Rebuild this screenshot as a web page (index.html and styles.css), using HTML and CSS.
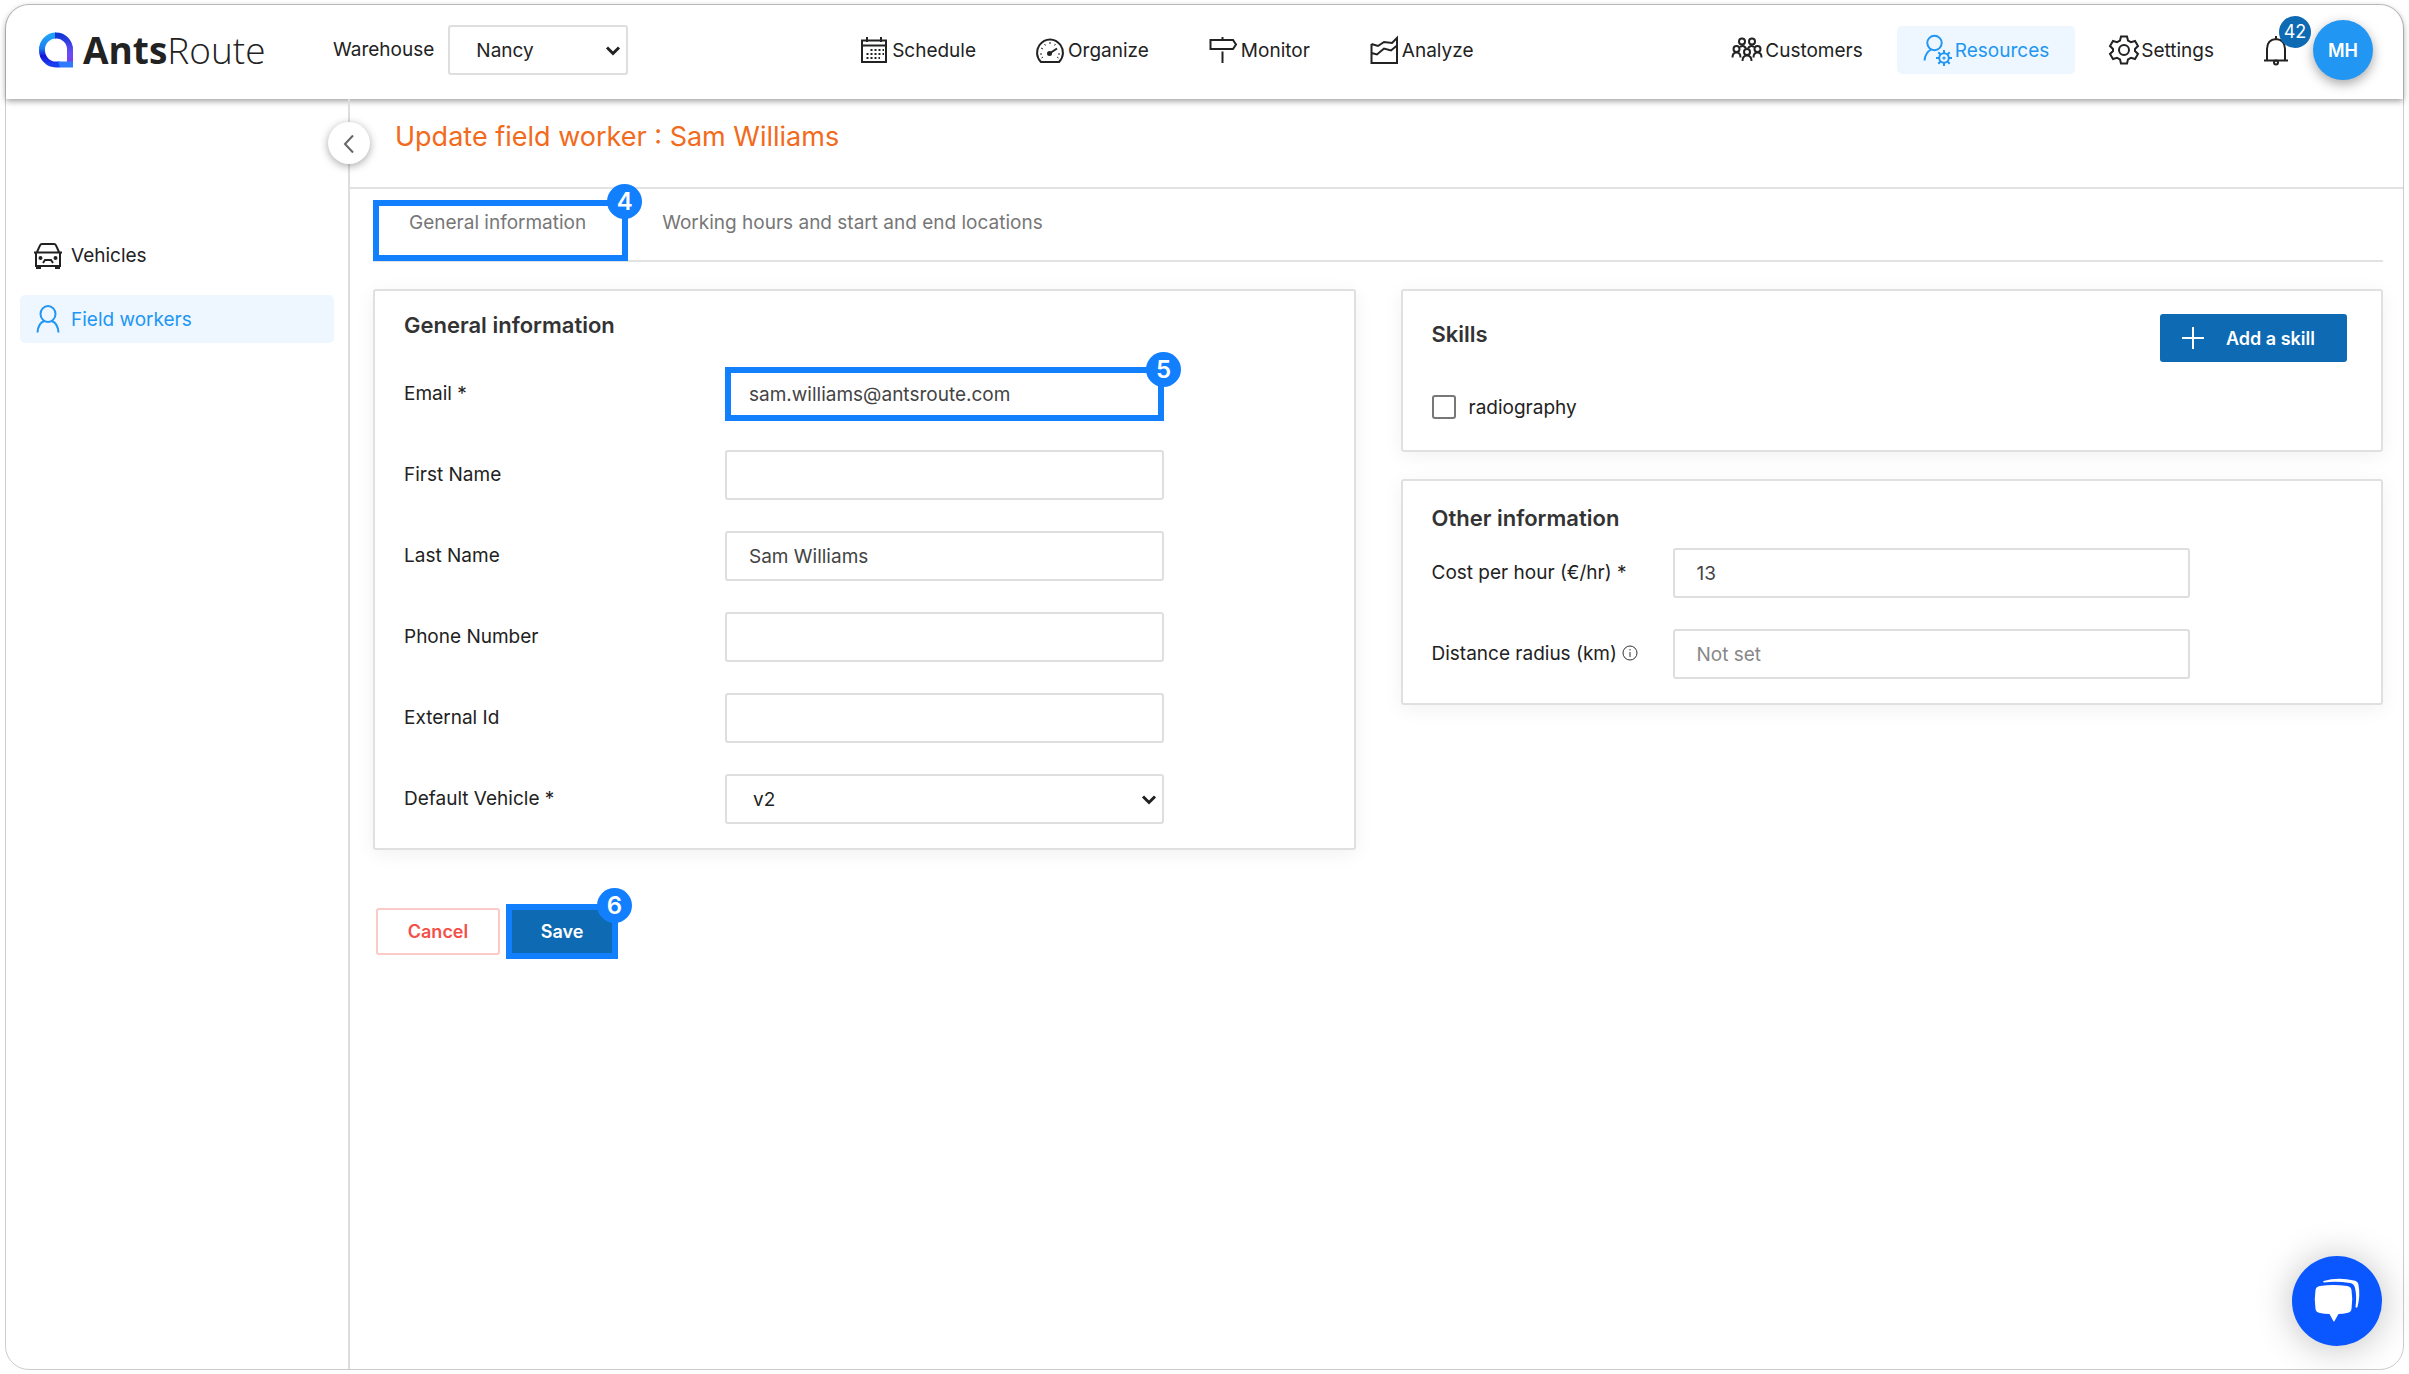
FILE: index.html
```
<!DOCTYPE html>
<html lang="en">
<head>
  <meta charset="UTF-8" />
  <title>AntsRoute - Update field worker</title>
  <link rel="stylesheet" href="styles.css">
</head>
<body>

  <div class="app">
    <header class="topbar">
      <a class="brand" href="#">
        <svg class="brand-mark" viewBox="0 0 36 36">
          <defs>
            <linearGradient id="ringLeft" x1="0" y1="0" x2="0" y2="1">
              <stop offset="0" stop-color="#1fa2f5"/>
              <stop offset="0.45" stop-color="#1c7df0"/>
              <stop offset="0.7" stop-color="#1414d8"/>
              <stop offset="1" stop-color="#1a3ff0"/>
            </linearGradient>
            <linearGradient id="ringRight" x1="0" y1="0" x2="0" y2="1">
              <stop offset="0" stop-color="#1237d6"/>
              <stop offset="0.6" stop-color="#6a4df5"/>
              <stop offset="1" stop-color="#7a3cf0"/>
            </linearGradient>
          </defs>
          <path d="M18 3.5A14 14 0 0 0 4 18A14 14 0 0 0 18 32.500L22 32.500" fill="none" stroke="url(#ringLeft)" stroke-width="6"/>
          <path d="M17 3.500H18A14 14 0 0 1 32 18V32.500" fill="none" stroke="url(#ringRight)" stroke-width="6"/>
          <path d="M20 29.500H35V35.500H22Z" fill="#2f7bff"/>
        </svg>
        <span class="brand-name"><b>Ants</b>Route</span>
      </a>

      <div class="warehouse">
        <label for="warehouse">Warehouse</label>
        <div class="select">
          <select id="warehouse"><option>Nancy</option></select>
          <svg class="caret" viewBox="0 0 16 12"><path d="M2 2.500L8 8.500L14 2.500"/></svg>
        </div>
      </div>

      <nav class="nav nav-main">
        <a href="#">
          <svg class="icon" viewBox="0 0 28 28"><path d="M2 4.500H26V26H2ZM2 9.500H26M7 1V6M21 1V6"/><path class="dots" d="M10.500 14H24M6.500 18H24M6.500 22H20"/></svg>
          Schedule
        </a>
        <a href="#">
          <svg class="icon" viewBox="0 0 28 28"><path d="M5 26H23C28 21 28 14 24.500 9C19 1.500 9 1.500 3.500 9C0 14 0 21 5 26Z"/><path class="ticks" d="M14 6V8M8.500 8L9.500 9.500M5 12L7 13M4 18H6M22 18H24M19.500 8L18.500 9.500M5.500 22L7 21M21 21L22.500 22"/><path d="M13.500 17.500L21 12.500"/><circle class="solid" cx="13.500" cy="17.500" r="1.500"/></svg>
          Organize
        </a>
        <a href="#">
          <svg class="icon" viewBox="0 0 28 28"><path d="M1.500 4H24L27 8.500L24 13H1.500ZM13.500 1V4M13.500 15.500V27"/></svg>
          Monitor
        </a>
        <a href="#">
          <svg class="icon" viewBox="0 0 28 28"><path d="M1.500 8V27H27V2L22 7L14 6L8 10L1.500 8M1.500 17L7 18.500L14 12.500L21 14.500L27 9.500"/></svg>
          Analyze
        </a>
      </nav>

      <nav class="nav nav-side">
        <a href="#">
          <svg class="icon icon-wide" viewBox="0 0 32 28"><circle cx="11" cy="5.500" r="3"/><circle cx="21" cy="5.500" r="3"/><circle cx="5.500" cy="13" r="3"/><circle cx="26.500" cy="13" r="3"/><circle cx="16" cy="16" r="3"/><path d="M1.500 21.500C1.500 18 3 16.500 5.500 16.500S9.500 18 9.500 21.500M22.500 21.500C22.500 18 24 16.500 26.500 16.500S30.500 18 30.500 21.500M11.500 25C11.500 21 13 19.500 16 19.500S20.500 21 20.500 25M9 11C12 9 14 10.500 15 12.500M17 12.500C18 10.500 20 9 23 11"/></svg>
          Customers
        </a>
        <a class="active" href="#">
          <svg class="icon icon-tall" viewBox="0 0 30 34"><circle cx="11.500" cy="10" r="7.200"/><path d="M1.500 27.500C2 22 4.500 18.500 8 16.500"/><circle cx="21" cy="25" r="4.800"/><circle class="solid" cx="21" cy="25" r=".6"/><path d="M21 17V20M21 30V33M13 25H16M26 25H29M15.300 19.300L17.500 21.500M24.500 28.500L26.700 30.700M15.300 30.700L17.500 28.500M24.500 21.500L26.700 19.300"/></svg>
          Resources
        </a>
        <a href="#">
          <svg class="icon icon-gear" viewBox="0 0 30 30"><path d="M12 1.500H18L19 5.500L22 7.200L26 6L29 11L26 14V16L29 19L26 24L22 22.800L19 24.500L18 28.500H12L11 24.500L8 22.800L4 24L1 19L4 16V14L1 11L4 6L8 7.200L11 5.500Z"/><circle cx="15" cy="15" r="5"/></svg>
          Settings
        </a>
      </nav>

      <button class="bell" type="button" aria-label="Notifications">
        <svg class="icon icon-gear" viewBox="0 0 30 30"><path d="M3 25.500H27M6 25V14C6 8 9 4.500 15 4C21 4.500 24 8 24 14V25M15 1V4"/><circle cx="15" cy="27.500" r="2"/></svg>
        <span class="bell-count">42</span>
      </button>
      <button class="avatar" type="button">MH</button>
    </header>

    <div class="body">
      <aside class="sidebar">
        <button class="collapse" type="button" aria-label="Collapse menu">
          <svg viewBox="0 0 12 20"><path d="M10 1.500L2 10L10 18.500"/></svg>
        </button>
        <a href="#">
          <svg class="icon icon-gear" viewBox="0 0 30 28"><path d="M1 11.500H29M4 11L7 4.500Q7.500 3 9 3H21Q22.500 3 23 4.500L26 11M3 12V25H27V12M4 25V27H7V25M23 25V27H26V25M10 22L12 19H18L20 22"/><circle class="solid" cx="7.500" cy="17" r="1"/><circle class="solid" cx="22.500" cy="17" r="1"/></svg>
          Vehicles
        </a>
        <a class="active" href="#">
          <svg class="icon icon-gear" viewBox="0 0 30 30"><ellipse cx="15" cy="10" rx="7.500" ry="8"/><path d="M4.500 28.500C5 22 8 18 11.500 17M25.500 28.500C25 22 22 18 18.500 17"/></svg>
          Field workers
        </a>
      </aside>

      <main class="main">
        <h1 class="page-title">Update field worker : Sam Williams</h1>

        <div class="content">
          <div class="tabs">
            <button class="tab marked" type="button">General information<span class="step">4</span></button>
            <button class="tab" type="button">Working hours and start and end locations</button>
          </div>

          <form class="form">
            <div class="columns">
              <section class="card card-general">
                <h2>General information</h2>
                <div class="row">
                  <label for="email">Email *</label>
                  <div class="field marked">
                    <input id="email" type="text" value="sam.williams@antsroute.com">
                    <span class="step">5</span>
                  </div>
                </div>
                <div class="row">
                  <label for="first">First Name</label>
                  <div class="field"><input id="first" type="text"></div>
                </div>
                <div class="row">
                  <label for="last">Last Name</label>
                  <div class="field"><input id="last" type="text" value="Sam Williams"></div>
                </div>
                <div class="row">
                  <label for="phone">Phone Number</label>
                  <div class="field"><input id="phone" type="text"></div>
                </div>
                <div class="row">
                  <label for="external">External Id</label>
                  <div class="field"><input id="external" type="text"></div>
                </div>
                <div class="row">
                  <label for="vehicle">Default Vehicle *</label>
                  <div class="field select">
                    <select id="vehicle"><option>v2</option></select>
                    <svg class="caret" viewBox="0 0 16 12"><path d="M2 2.500L8 8.500L14 2.500"/></svg>
                  </div>
                </div>
              </section>

              <div class="column">
                <section class="card card-skills">
                  <div class="card-head">
                    <h2>Skills</h2>
                    <button class="btn btn-add" type="button">
                      <svg viewBox="0 0 22 22"><path d="M11 0V22M0 11H22"/></svg>
                      Add a skill
                    </button>
                  </div>
                  <label class="check"><input type="checkbox"> radiography</label>
                </section>

                <section class="card card-other">
                  <h2>Other information</h2>
                  <div class="row">
                    <label for="cost">Cost per hour (€/hr) *</label>
                    <div class="field"><input id="cost" type="text" value="13"></div>
                  </div>
                  <div class="row">
                    <label for="radius">Distance radius (km)
                      <svg class="info" viewBox="0 0 16 16"><circle cx="8" cy="8" r="7"/><path d="M8 7V12M8 4V5.500"/></svg>
                    </label>
                    <div class="field"><input id="radius" type="text" placeholder="Not set"></div>
                  </div>
                </section>
              </div>
            </div>

            <div class="actions">
              <button class="btn btn-cancel" type="button">Cancel</button>
              <button class="btn btn-save marked" type="submit">Save<span class="step">6</span></button>
            </div>
          </form>
        </div>
      </main>
    </div>

    <button class="chat" type="button" aria-label="Open chat">
      <svg viewBox="0 0 46 46"><path d="M6 8Q19 6 33 8Q37 8.500 37.500 12Q39 21 37.500 31Q37 34.500 33 35Q29 35.800 24.500 36L20.500 43Q20 44 19.300 43L15.500 36Q10 35.800 6 35Q2 34.500 1.500 31Q0 21 1.500 12Q2 8.500 6 8Z"/><path d="M9.500 3Q24 -1 40 2.500Q44 3 44.500 7Q46.500 17 43.500 29Q42.500 30.500 41.500 29Q43 18 41 10Q40 5.500 36 5Q22 3 10 4.500Q8.500 4 9.500 3Z"/></svg>
    </button>
  </div>

</body>
</html>
```
FILE: styles.css
```
* {
  box-sizing: border-box;
}
body {
  margin: 0;
  padding: 4px 5px;
  background: #fff;
  color: #222;
  font-family: Inter, "Liberation Sans", sans-serif;
  font-size: 19px;
}
a {
  color: inherit;
  text-decoration: none;
}
button, input, select {
  font: inherit;
  color: inherit;
}
button {
  padding: 0;
  border: 0;
  background: none;
  cursor: pointer;
}
svg {
  flex: none;
  overflow: visible;
}
h1, h2 {
  margin: 0;
}
.app {
  display: flex;
  flex-direction: column;
  min-height: calc(100vh - 8px);
  border: 1px solid #ccc;
  border-radius: 24px;
}

/* top bar */
.topbar {
  position: relative;
  display: flex;
  align-items: center;
  height: 94px;
  padding: 0 30px 4px 32px;
  border-radius: 24px 24px 0 0;
  background: #fff;
  box-shadow: 0 2px 6px rgba(0,0,0,0.4);
}
.brand {
  display: flex;
  align-items: center;
  gap: 9px;
  width: 295px;
}
.brand-mark {
  width: 36px;
  height: 36px;
}
.brand-name {
  font-family: "Open Sans", sans-serif;
  font-size: 37px;
  font-weight: 300;
  line-height: 40px;
}
.brand-name b {
  font-weight: 700;
}
.warehouse {
  display: flex;
  align-items: center;
  gap: 14px;
}
.warehouse label {
  padding-bottom: 2px;
}
.select {
  position: relative;
}
.select select {
  appearance: none;
  width: 100%;
  height: 50px;
  padding: 0 26px;
  border: 2px solid #dedede;
  border-radius: 3px;
  background: #fff;
}
.warehouse .select {
  width: 180px;
}
.caret {
  position: absolute;
  top: 20px;
  right: 7px;
  width: 16px;
  height: 12px;
  fill: none;
  stroke: #222;
  stroke-width: 3;
  pointer-events: none;
}
.nav {
  display: flex;
  align-items: center;
}
.nav a {
  display: flex;
  align-items: center;
  gap: 4px;
}
.nav-main {
  gap: 60px;
  margin: 0 auto;
}
.nav-side {
  gap: 8px;
}
.nav-side a {
  gap: 2px;
  height: 48px;
  padding: 0 26px;
  border-radius: 5px;
}
.icon {
  width: 28px;
  height: 28px;
  fill: none;
  stroke: currentColor;
  stroke-width: 2;
}
.icon-wide {
  width: 32px;
}
.icon-tall {
  width: 30px;
  height: 34px;
}
.icon-gear {
  width: 30px;
  height: 30px;
}
.icon .solid {
  fill: currentColor;
}
.icon .dots {
  stroke-dasharray: 2 2;
}
.icon .ticks {
  stroke-width: 1;
}
.active {
  background: #eef7ff;
  color: #2196f3;
}
.bell {
  position: relative;
  height: 30px;
  margin: 0 22px 0 21px;
}
.bell-count {
  position: absolute;
  top: -19px;
  left: 18px;
  width: 32px;
  border-radius: 16px;
  background: #0d6ab3;
  color: #fff;
  font-size: 18px;
  line-height: 32px;
}
.avatar {
  width: 60px;
  height: 60px;
  border-radius: 50%;
  background: #2196f3;
  box-shadow: 0 4px 12px rgba(0,0,0,0.35);
  color: #fff;
  font-size: 18px;
  font-weight: 600;
}

/* sidebar */
.body {
  display: flex;
  flex: 1;
}
.sidebar {
  position: relative;
  display: flex;
  flex-direction: column;
  gap: 16px;
  width: 344px;
  padding: 132px 14px 0;
  border-right: 2px solid #ddd;
}
.sidebar a {
  display: flex;
  align-items: center;
  gap: 8px;
  height: 48px;
  padding: 0 13px;
  border-radius: 5px;
}
.collapse {
  position: absolute;
  top: 23px;
  right: -22px;
  width: 42px;
  height: 42px;
  border-radius: 50%;
  background: #fff;
  box-shadow: 0 2px 8px rgba(0,0,0,0.35);
}
.collapse svg {
  width: 12px;
  height: 20px;
  vertical-align: middle;
  fill: none;
  stroke: #666;
  stroke-width: 2;
}

/* main area */
.main {
  flex: 1;
}
.page-title {
  padding: 20px 45px 32px;
  border-bottom: 2px solid #e2e2e2;
  color: #f26a1b;
  font-size: 27px;
  font-weight: 400;
  line-height: 36px;
}
.content {
  padding: 11px 20px 40px 23px;
}
.tabs {
  display: flex;
  border-bottom: 2px solid #e2e2e2;
}
.tab {
  height: 61px;
  margin-bottom: -1px;
  padding: 0 34px 16px;
  color: #777;
}
.marked {
  position: relative;
}
.tab.marked {
  padding: 0 36px 16px 30px;
  border: 6px solid #127fff;
}
.step {
  position: absolute;
  top: -22px;
  right: -20px;
  width: 35px;
  border-radius: 50%;
  background: #127fff;
  color: #fff;
  font-size: 24px;
  font-weight: 600;
  line-height: 35px;
  text-align: center;
}
.columns {
  display: grid;
  grid-template-columns: 1fr 1fr;
  align-items: start;
  gap: 45px;
  padding-top: 27px;
}
.column {
  display: grid;
  gap: 27px;
}
.card {
  padding: 0 29px 24px;
  border: 2px solid #e0e0e0;
  border-radius: 3px;
  background: #fff;
  box-shadow: 0 4px 20px rgba(0,0,0,0.06);
}
.card h2 {
  color: #333;
  font-size: 22px;
  font-weight: 600;
  line-height: 26px;
}
.card-general {
  display: grid;
  gap: 31px;
  padding-top: 21px;
}
.row {
  display: flex;
  align-items: center;
}
.row label {
  width: 321px;
  padding-bottom: 2px;
}
.field {
  width: 439px;
}
.field input {
  width: 100%;
  height: 50px;
  padding: 0 22px;
  border: 2px solid #dedede;
  border-radius: 3px;
  background: #fff;
  color: #444;
}
.field.marked input {
  height: 54px;
  margin: -2px 0;
  padding: 0 18px;
  border: 6px solid #127fff;
  border-radius: 0;
}
.field.marked .step {
  top: -17px;
  right: -17px;
}
.field input::placeholder {
  color: #888;
}
.card-head {
  display: flex;
  justify-content: space-between;
}
.card-skills {
  padding: 23px 34px 31px 29px;
}
.card-skills h2 {
  padding-top: 7px;
}
.check {
  display: flex;
  align-items: center;
  gap: 13px;
  padding-top: 33px;
}
.check input {
  appearance: none;
  width: 24px;
  height: 24px;
  margin: 0;
  border: 2px solid #777;
  border-radius: 3px;
}
.card-other {
  display: grid;
  gap: 31px;
  padding-top: 24px;
}
.card-other h2 {
  margin-bottom: -14px;
}
.card-other .row label {
  width: 241px;
}
.card-other .field {
  width: 517px;
}
.info {
  width: 16px;
  height: 16px;
  vertical-align: -1px;
  fill: none;
  stroke: #333;
}
.btn {
  border-radius: 3px;
  font-size: 18px;
  font-weight: 600;
}
.btn-add {
  display: flex;
  align-items: center;
  gap: 22px;
  height: 48px;
  padding: 0 32px 0 22px;
  background: #0d6ab3;
  color: #fff;
}
.btn-add svg {
  width: 22px;
  height: 22px;
  stroke: #fff;
  stroke-width: 2;
}
.actions {
  display: flex;
  align-items: center;
  gap: 6px;
  padding: 54px 3px 0;
}
.btn-cancel {
  width: 124px;
  height: 47px;
  border: 2px solid #fbcac6;
  color: #f4504a;
}
.btn-save {
  width: 112px;
  height: 55px;
  border: 6px solid #127fff;
  border-radius: 0;
  background: #0d6ab3;
  color: #fff;
}

/* chat launcher */
.chat {
  position: fixed;
  right: 27px;
  bottom: 28px;
  width: 90px;
  height: 90px;
  border-radius: 50%;
  background: #0a57ff;
  box-shadow: 0 2px 36px rgba(0,0,0,0.25);
}
.chat svg {
  width: 46px;
  height: 46px;
  vertical-align: middle;
  fill: #fff;
}
```
